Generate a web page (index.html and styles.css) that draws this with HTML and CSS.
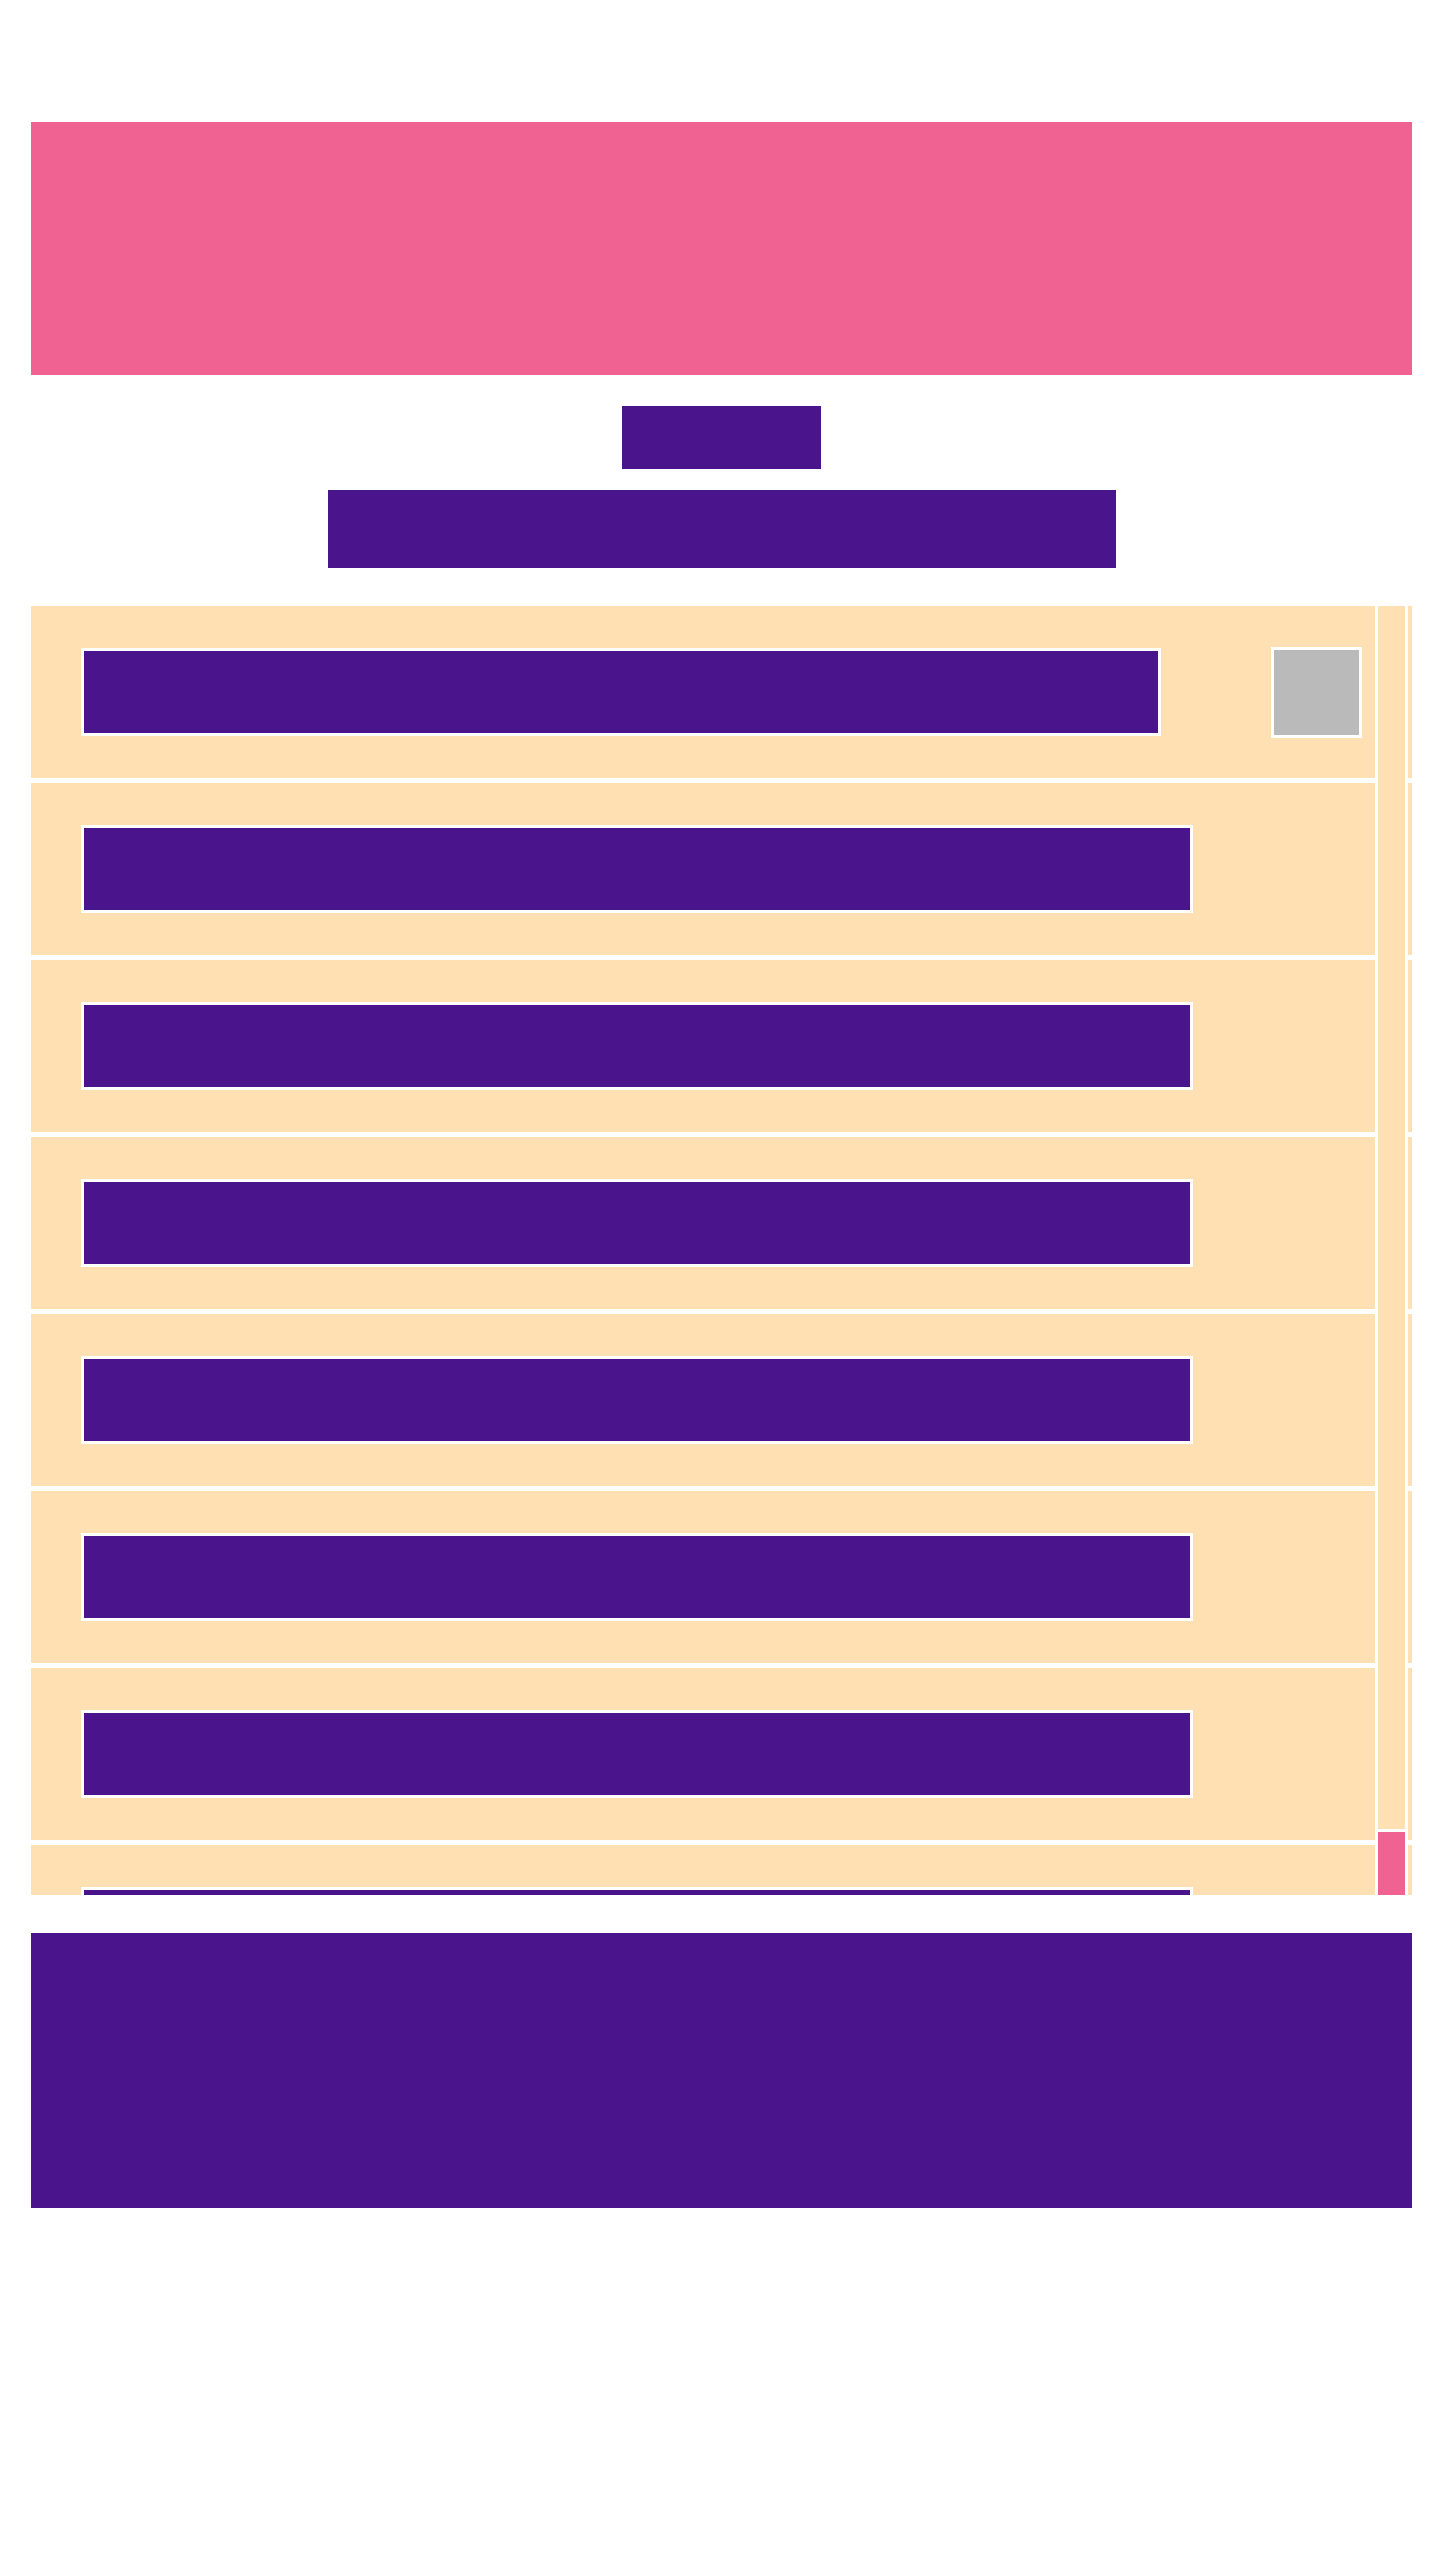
FILE: index.html
```html
<!DOCTYPE html>
<html lang="en">
<head>
<meta charset="utf-8">
<title>Skeleton page</title>
<link rel="stylesheet" href="styles.css">
</head>
<body>
<div class="page">
  <div class="hero"></div>
  <div class="title"></div>
  <div class="subtitle"></div>
  <div class="list">
    <div class="rows">
      <div class="row"><div class="line line-short"></div><div class="thumb"></div></div>
      <div class="row"><div class="line"></div></div>
      <div class="row"><div class="line"></div></div>
      <div class="row"><div class="line"></div></div>
      <div class="row"><div class="line"></div></div>
      <div class="row"><div class="line"></div></div>
      <div class="row"><div class="line"></div></div>
      <div class="row"><div class="line"></div></div>
      <div class="row"><div class="line"></div></div>
    </div>
    <div class="scrollbar">
      <div class="track"></div>
      <div class="handle"></div>
    </div>
  </div>
  <div class="footer"></div>
</div>
</body>
</html>
```
FILE: styles.css
```css
html, body {
  margin: 0;
  padding: 0;
  background: #ffffff;
  font-family: "Liberation Sans", Arial, sans-serif;
}

.page {
  width: 1381px;
  margin-left: 31px;
  padding-top: 122px;
  display: flex;
  flex-direction: column;
  align-items: center;
}

.hero {
  width: 100%;
  height: 253px;
  background: #f06292;
}

.title {
  width: 199px;
  height: 63px;
  margin-top: 31px;
  background: #4a148c;
}

.subtitle {
  width: 788px;
  height: 78px;
  margin-top: 21px;
  background: #4a148c;
}

.list {
  position: relative;
  width: 100%;
  height: 1289px;
  margin-top: 38px;
  overflow: hidden;
}

.rows {
  display: flex;
  flex-direction: column;
  gap: 5px;
}

.row {
  flex: 0 0 auto;
  height: 172px;
  box-sizing: border-box;
  padding: 0 50px;
  background: #ffe0b2;
  display: flex;
  align-items: center;
  justify-content: space-between;
}

.line {
  width: 1112px;
  height: 88px;
  box-sizing: border-box;
  border: 3px solid #ffffff;
  background: #4a148c;
}

.line-short {
  width: 1080px;
}

.thumb {
  width: 91px;
  height: 91px;
  box-sizing: border-box;
  border: 3px solid #ffffff;
  background: #bababa;
}

.scrollbar {
  position: absolute;
  top: 0;
  bottom: 0;
  right: 4px;
  width: 33px;
  box-sizing: border-box;
  padding: 0 3px;
  background: #ffffff;
  display: flex;
  flex-direction: column;
  gap: 3px;
}

.track {
  flex: 1 1 auto;
  background: #ffe0b2;
}

.handle {
  flex: 0 0 63px;
  background: #f06292;
}

.footer {
  width: 100%;
  height: 275px;
  margin-top: 38px;
  background: #4a148c;
}
```
